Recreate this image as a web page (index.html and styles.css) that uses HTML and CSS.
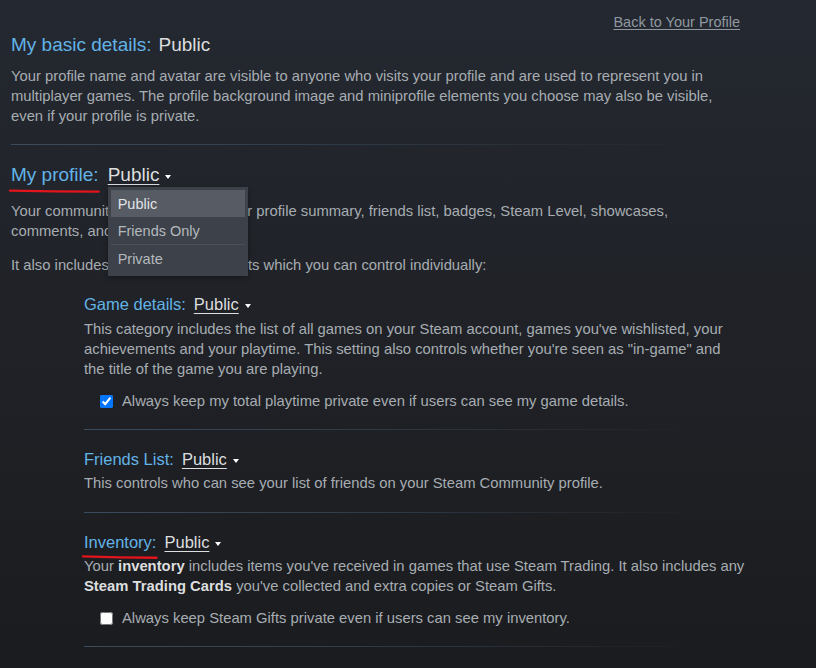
FILE: index.html
```html
<!DOCTYPE html>
<html>
<head>
<meta charset="utf-8">
<link rel="stylesheet" href="styles.css">
</head>
<body>
<div class="page">
  <div class="topbar"><a class="back" href="#">Back to Your Profile</a></div>

  <section class="block basic">
    <h2 class="title"><span class="label">My basic details:</span><span class="value">Public</span></h2>
    <p class="desc">Your profile name and avatar are visible to anyone who visits your profile and are used to represent you in multiplayer games. The profile background image and miniprofile elements you choose may also be visible, even if your profile is private.</p>
  </section>

  <div class="divider"></div>

  <section class="block profile">
    <h2 class="title">
      <span class="label marked">My profile:<svg class="scribble" viewBox="0 0 90 4" preserveAspectRatio="none"><path d="M1 1.6 Q45 2.4 89 2.6" stroke="#e2141c" stroke-width="2.4" fill="none" stroke-linecap="round"/></svg></span><span class="dropdown"><span class="value link">Public</span><span class="caret"></span>
        <span class="menu">
          <span class="item active">Public</span>
          <span class="item">Friends Only</span>
          <span class="item sep">Private</span>
        </span>
      </span>
    </h2>
    <p class="desc">Your community profile includes your profile summary, friends list, badges, Steam Level, showcases, comments, and group membership.</p>
    <p class="desc second">It also includes the following elements which you can control individually:</p>

    <div class="subs">
      <section class="sub game">
        <h3 class="subtitle"><span class="label">Game details:</span><span class="value link">Public</span><span class="caret"></span></h3>
        <p class="desc">This category includes the list of all games on your Steam account, games you've wishlisted, your achievements and your playtime. This setting also controls whether you're seen as "in-game" and the title of the game you are playing.</p>
        <label class="check"><input type="checkbox" checked><span>Always keep my total playtime private even if users can see my game details.</span></label>
      </section>
      <div class="divider"></div>

      <section class="sub friends">
        <h3 class="subtitle"><span class="label">Friends List:</span><span class="value link">Public</span><span class="caret"></span></h3>
        <p class="desc">This controls who can see your list of friends on your Steam Community profile.</p>
      </section>
      <div class="divider"></div>

      <section class="sub inventory">
        <h3 class="subtitle"><span class="label marked">Inventory:<svg class="scribble" viewBox="0 0 90 4" preserveAspectRatio="none"><path d="M1 1.4 Q45 2.6 89 2.8" stroke="#e2141c" stroke-width="2.4" fill="none" stroke-linecap="round"/></svg></span><span class="value link">Public</span><span class="caret"></span></h3>
        <p class="desc">Your <b>inventory</b> includes items you've received in games that use Steam Trading. It also includes any <b>Steam Trading Cards</b> you've collected and extra copies or Steam Gifts.</p>
        <label class="check"><input type="checkbox"><span>Always keep Steam Gifts private even if users can see my inventory.</span></label>
      </section>
      <div class="divider"></div>
    </div>
  </section>
</div>
</body>
</html>
```

FILE: styles.css
```css
html, body {
  margin: 0;
  padding: 0;
}
body {
  background: linear-gradient(180deg, #242830 0%, #1f2126 55%, #1b1c1f 100%);
  min-height: 668px;
  font-family: "Liberation Sans", Arial, sans-serif;
  font-size: 14.8px;
  line-height: 20px;
  color: #a7adb2;
}
.page {
  width: 729px;
  padding: 12px 0 0 11px;
}
.topbar {
  display: flex;
  justify-content: flex-end;
  height: 20px;
}
.back {
  color: #8f98a0;
  font-size: 14.5px;
  text-decoration: underline;
  text-underline-offset: 2px;
}
.title {
  margin: 0;
  font-size: 19px;
  line-height: 24px;
  font-weight: normal;
  display: flex;
  align-items: center;
}
.basic .title { margin-top: 1px; }
.basic .title .label { margin-right: 7px; }
.basic .desc { margin-top: 9px; }
.label {
  color: #62b3e6;
  margin-right: 9px;
}
.value {
  color: #dcdedf;
}
.link {
  text-decoration: underline;
  text-underline-offset: 3px;
  text-decoration-thickness: 1px;
}
.caret {
  width: 0;
  height: 0;
  border-left: 3.5px solid transparent;
  border-right: 3.5px solid transparent;
  border-top: 4px solid #ffffff;
  margin-left: 6px;
  margin-top: 4px;
}
.desc {
  margin: 0;
}
.divider {
  height: 1px;
  width: 690px;
  background: linear-gradient(90deg, #3b4c5e 0%, #2f3b48 45%, rgba(40, 44, 52, 0) 100%);
}
.basic { padding-bottom: 18px; }
.profile { padding-top: 18px; }
.profile > .desc { margin-top: 14px; }
.profile > .desc.second { margin-top: 14px; }

.marked { position: relative; }
.scribble {
  position: absolute;
  left: -2px;
  bottom: -6px;
  width: calc(100% + 3px);
  height: 4px;
  overflow: visible;
}

.dropdown {
  position: relative;
  display: flex;
  align-items: center;
}
.menu {
  position: absolute;
  left: 0;
  top: 24px;
  width: 134px;
  padding: 3px 3px 4px;
  background: #3d4149;
  box-shadow: 0 2px 6px rgba(0, 0, 0, 0.35);
  display: flex;
  flex-direction: column;
  font-size: 14.5px;
  line-height: 20px;
  z-index: 5;
}
.item {
  display: block;
  padding: 4px 7px 3px;
  color: #b4b9be;
}
.item.active {
  background: #565b64;
  color: #e1e4e7;
}
.item.sep {
  border-top: 1px solid #4c515a;
}

.subs {
  margin-left: 73px;
  width: 664px;
  margin-top: 18px;
}
.subs .divider { width: 620px; }
.sub {
  padding-bottom: 18px;
}
.sub.friends { padding-top: 18px; padding-bottom: 19px; }
.sub.inventory { padding-top: 18px; }
.subtitle {
  margin: 0;
  font-size: 16.5px;
  line-height: 22px;
  font-weight: normal;
  display: flex;
  align-items: center;
}
.subtitle .label { margin-right: 8px; }
.sub .desc { margin-top: 3px; }
.sub.game .desc {
  margin-top: 4px;
  max-width: 652px;
}
.sub .desc b {
  color: #dcdedf;
  font-weight: bold;
}
.check {
  display: flex;
  align-items: center;
  gap: 9px;
  padding-left: 16px;
  margin-top: 12px;
  height: 20px;
}
.check input {
  margin: 0;
  width: 13px;
  height: 13px;
}
```
